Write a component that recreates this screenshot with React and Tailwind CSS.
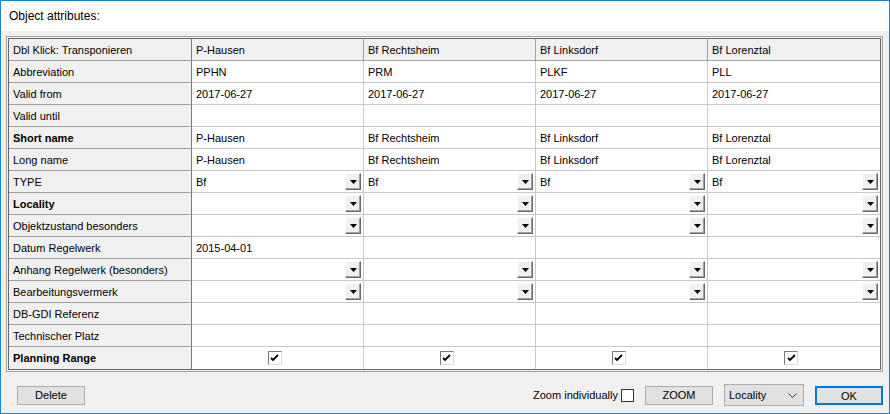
import React from "react";

const cols = ["P-Hausen", "Bf Rechtsheim", "Bf Linksdorf", "Bf Lorenztal"];

const rows = [
  { label: "Abbreviation", values: ["PPHN", "PRM", "PLKF", "PLL"] },
  { label: "Valid from", values: ["2017-06-27", "2017-06-27", "2017-06-27", "2017-06-27"] },
  { label: "Valid until", values: ["", "", "", ""] },
  { label: "Short name", bold: true, values: cols },
  { label: "Long name", values: cols },
  { label: "TYPE", combo: true, values: ["Bf", "Bf", "Bf", "Bf"] },
  { label: "Locality", bold: true, combo: true, values: ["", "", "", ""] },
  { label: "Objektzustand besonders", combo: true, values: ["", "", "", ""] },
  { label: "Datum Regelwerk", values: ["2015-04-01", "", "", ""] },
  { label: "Anhang Regelwerk (besonders)", combo: true, values: ["", "", "", ""] },
  { label: "Bearbeitungsvermerk", combo: true, values: ["", "", "", ""] },
  { label: "DB-GDI Referenz", values: ["", "", "", ""] },
  { label: "Technischer Platz", values: ["", "", "", ""] },
  { label: "Planning Range", bold: true, check: true, values: ["", "", "", ""] },
];

const DropBtn = () => (
  <div className="absolute right-[2px] top-[2px] w-[16px] h-[17px] bg-[#f0f0f0] border border-t-white border-l-white border-r-[#696969] border-b-[#696969] shadow-[inset_-1px_-1px_0_#a0a0a0] flex items-center justify-center">
    <svg width="7" height="4" viewBox="0 0 7 4">
      <path d="M0 0h7L3.5 4z" fill="#000" />
    </svg>
  </div>
);

const Check = () => (
  <div className="w-[14px] h-[14px] bg-white border border-t-[#7a7a7a] border-l-[#7a7a7a] border-r-[#dcdcdc] border-b-[#dcdcdc] flex items-center justify-center">
    <svg width="9" height="8" viewBox="0 0 9 8">
      <path d="M1 4l2 2 5-5" stroke="#000" strokeWidth="1.8" fill="none" />
    </svg>
  </div>
);

export default function App() {
  return (
    <div
      className="w-[890px] h-[414px] border border-[#1883d7] bg-[#f0f0f0] flex flex-col text-[11px] text-black"
      style={{ fontFamily: '"Liberation Sans", Arial, sans-serif' }}
    >
      <div className="h-[30px] bg-white flex items-center pl-[8px] text-[12px]">
        Object attributes:
      </div>
      <div className="flex-1 pt-[5px] pl-[5px]">
        <div className="w-[877px] border border-[#a0a0a0] p-[1px]">
          <div className="border border-[#696969] bg-white grid grid-cols-[183px_172px_172px_172px_172px]">
            <div className="h-[22px] bg-[#f0f0f0] border-b border-r border-b-[#a0a0a0] border-r-[#7a7a7a] flex items-center pl-[4px] pt-[1px]">
              Dbl Klick: Transponieren
            </div>
            {cols.map((c, i) => (
              <div
                key={c}
                className={
                  "h-[22px] bg-[#f0f0f0] border-b border-[#a0a0a0] flex items-center pl-[4px] pt-[1px] " +
                  (i < 3 ? "border-r" : "")
                }
              >
                {c}
              </div>
            ))}
            {rows.map((r, ri) => (
              <React.Fragment key={r.label}>
                <div
                  className={
                    "h-[22px] bg-[#f0f0f0] border-r border-r-[#7a7a7a] flex items-center pl-[4px] pt-[1px] " +
                    (ri < rows.length - 1 ? "border-b border-b-[#a0a0a0] " : "") +
                    (r.bold ? "font-bold" : "")
                  }
                >
                  {r.label}
                </div>
                {r.values.map((v, i) => (
                  <div
                    key={i}
                    className={
                      "relative h-[22px] border-[#c8c8c8] flex items-center " +
                      (i < 3 ? "border-r " : "") +
                      (ri < rows.length - 1 ? "border-b " : "") +
                      (r.check ? "justify-center pr-[6px]" : "pl-[4px] pt-[1px]")
                    }
                  >
                    {r.check ? <Check /> : v}
                    {r.combo && <DropBtn />}
                  </div>
                ))}
              </React.Fragment>
            ))}
          </div>
        </div>
        <div className="flex items-center mt-[12px]">
          <button className="ml-[11px] w-[68px] h-[19px] bg-[#e1e1e1] border border-[#adadad] text-[11px]">
            Delete
          </button>
          <div className="ml-auto flex items-center">
            <span>Zoom individually</span>
            <div className="ml-[3px] w-[13px] h-[13px] bg-white border border-[#333]" />
            <button className="ml-[11px] w-[68px] h-[19px] bg-[#e1e1e1] border border-[#adadad] text-[11px]">
              ZOOM
            </button>
            <div className="ml-[11px] w-[80px] h-[22px] bg-[#e1e1e1] border border-[#adadad] flex items-center pl-[4px] pr-[6px] justify-between">
              <span>Locality</span>
              <svg width="9" height="5" viewBox="0 0 9 5">
                <path d="M0.5 0.5l4 4 4-4" stroke="#333" fill="none" />
              </svg>
            </div>
            <button className="ml-[11px] mr-[6px] w-[68px] h-[19px] bg-[#e1e1e1] border-2 border-[#0078d7] text-[11px]">
              OK
            </button>
          </div>
        </div>
      </div>
    </div>
  );
}
